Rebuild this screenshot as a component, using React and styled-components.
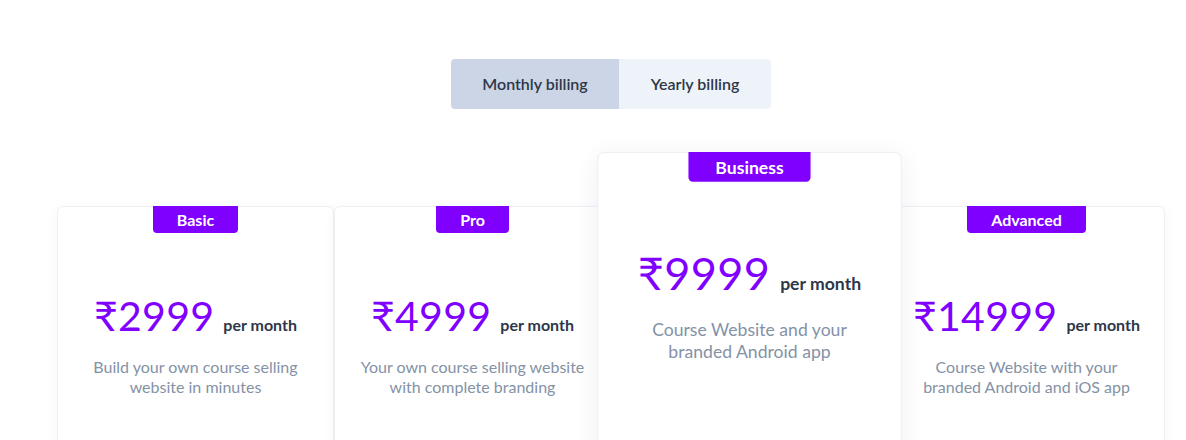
import React, { useState } from "react";
import styled, { createGlobalStyle } from "styled-components";

const GlobalStyle = createGlobalStyle`
  body {
    margin: 0;
    background: #fff;
    font-family: "Lato", "Noto Sans", sans-serif;
    overflow: hidden;
  }
`;

const PageStyle = styled.div`
  width: 1108px;
  margin-left: 57px;
  padding-top: 59px;
`;

const ToggleStyle = styled.div`
  display: flex;
  justify-content: center;
  margin-bottom: 97px;
`;

const ToggleButtonStyle = styled.button`
  border: none;
  height: 50px;
  width: ${(p) => p.width}px;
  padding: 0 0 1px;
  font-family: inherit;
  font-size: 16px;
  font-weight: 600;
  color: #2d3748;
  background: ${(p) => (p.active ? "#cbd5e6" : "#eef2f9")};
  border-radius: ${(p) => (p.first ? "4px 0 0 4px" : "0 4px 4px 0")};
  cursor: pointer;
`;

const CardsStyle = styled.div`
  display: grid;
  grid-template-columns: repeat(4, 1fr);
  align-items: start;
`;

const CardStyle = styled.div`
  display: flex;
  flex-direction: column;
  align-items: center;
  min-height: 320px;
  background: #fff;
  border: 1px solid #eef0f6;
  border-radius: 6px;
  box-shadow: 0 2px 14px rgba(30, 40, 90, 0.04);
  ${(p) =>
    p.featured &&
    `
    position: relative;
    z-index: 1;
    margin-top: -54px;
    transform: scale(1.1);
    transform-origin: top center;
    box-shadow: 0 4px 22px rgba(30, 40, 90, 0.07);
  `}
`;

const BadgeStyle = styled.div`
  background: #8000ff;
  color: #fff;
  font-size: 16px;
  font-weight: 700;
  line-height: 27px;
  padding: 0 24px;
  border-radius: 0 0 4px 4px;
  margin-top: -1px;
`;

const PriceRowStyle = styled.div`
  display: flex;
  align-items: baseline;
  justify-content: center;
  margin-top: 59px;
`;

const PriceStyle = styled.span`
  font-size: 41px;
  font-weight: 400;
  line-height: 48px;
  color: #8000ff;
  letter-spacing: 0.3px;
`;

const PerMonthStyle = styled.span`
  font-size: 16px;
  font-weight: 700;
  color: #2d3748;
  margin-left: 9px;
`;

const DescriptionStyle = styled.p`
  margin: 17px 0 0;
  padding: 0 16px;
  text-align: center;
  font-size: 16px;
  line-height: 20px;
  color: #8492a6;
`;

const plans = [
  { name: "Basic", price: "2999", desc: ["Build your own course selling", "website in minutes"] },
  { name: "Pro", price: "4999", desc: ["Your own course selling website", "with complete branding"] },
  { name: "Business", price: "9999", desc: ["Course Website and your", "branded Android app"], featured: true },
  { name: "Advanced", price: "14999", desc: ["Course Website with your", "branded Android and iOS app"] },
];

export default function App() {
  const [billing, setBilling] = useState("monthly");

  return (
    <PageStyle>
      <GlobalStyle />
      <ToggleStyle>
        <ToggleButtonStyle
          first
          width={168}
          active={billing === "monthly"}
          onClick={() => setBilling("monthly")}
        >
          Monthly billing
        </ToggleButtonStyle>
        <ToggleButtonStyle
          width={152}
          active={billing === "yearly"}
          onClick={() => setBilling("yearly")}
        >
          Yearly billing
        </ToggleButtonStyle>
      </ToggleStyle>
      <CardsStyle>
        {plans.map((plan) => (
          <CardStyle key={plan.name} featured={plan.featured}>
            <BadgeStyle>{plan.name}</BadgeStyle>
            <PriceRowStyle>
              <PriceStyle>₹{plan.price}</PriceStyle>
              <PerMonthStyle>per month</PerMonthStyle>
            </PriceRowStyle>
            <DescriptionStyle>
              {plan.desc[0]}
              <br />
              {plan.desc[1]}
            </DescriptionStyle>
          </CardStyle>
        ))}
      </CardsStyle>
    </PageStyle>
  );
}
